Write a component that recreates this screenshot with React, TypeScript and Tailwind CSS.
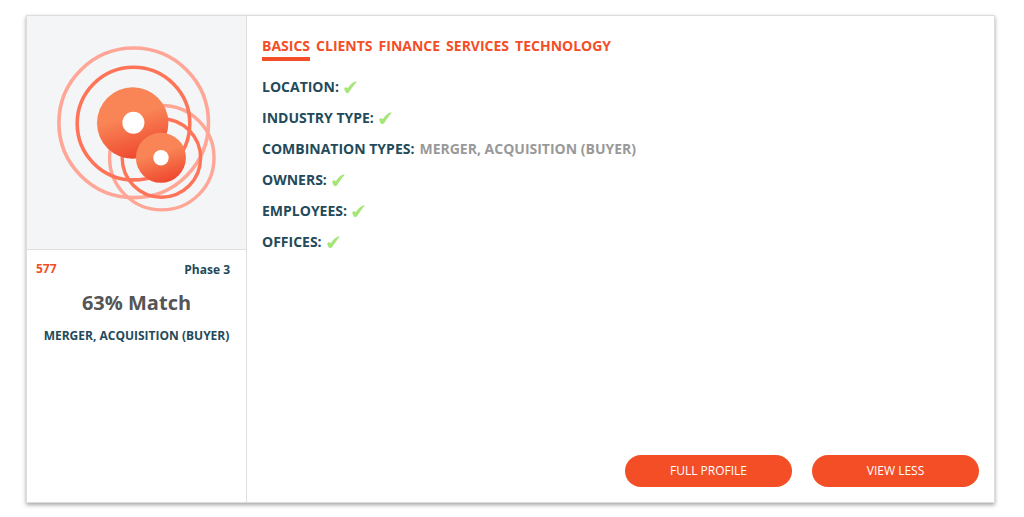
import React, { useState } from 'react';

interface Criterion {
  label: string;
  value?: string;
}

const TABS = ['BASICS', 'CLIENTS', 'FINANCE', 'SERVICES', 'TECHNOLOGY'];

const CRITERIA: Criterion[] = [
  { label: 'LOCATION:' },
  { label: 'INDUSTRY TYPE:' },
  { label: 'COMBINATION TYPES:', value: 'MERGER, ACQUISITION (BUYER)' },
  { label: 'OWNERS:' },
  { label: 'EMPLOYEES:' },
  { label: 'OFFICES:' },
];

const RingsLogo: React.FC = () => (
  <svg width="161" height="168" viewBox="0 0 161 168" fill="none" aria-hidden="true">
    <defs>
      <linearGradient id="disc" x1="0.35" y1="0" x2="0.65" y2="1">
        <stop offset="0.4" stopColor="#f98456" />
        <stop offset="1" stopColor="#ee452c" />
      </linearGradient>
    </defs>
    <circle cx="77.7" cy="77.8" r="74.8" stroke="#ffa696" strokeWidth="3.6" />
    <circle cx="105.8" cy="112.7" r="52.2" stroke="#ffa696" strokeWidth="3.4" />
    <circle cx="77.5" cy="78.6" r="56.3" stroke="#ff7459" strokeWidth="3.6" />
    <circle cx="105.4" cy="113" r="39.2" stroke="#ff7459" strokeWidth="3.4" />
    <circle cx="76.7" cy="78" r="35.7" fill="url(#disc)" />
    <circle cx="77.4" cy="77.7" r="11" fill="#fff" />
    <circle cx="104.9" cy="112.8" r="25" fill="url(#disc)" />
    <circle cx="105" cy="112.7" r="7.7" fill="#fff" />
  </svg>
);

const CheckMark: React.FC = () => (
  <svg width="13" height="13" viewBox="0 0 13 13" role="img" aria-label="Match">
    <path
      d="M0.3 8C0.1 6.1 2.8 5.6 3.8 7.3C5.8 4.1 8 1.7 10.6 0.7C11.6 0.3 12.4 0.5 12.6 0.9C10.2 3.4 7.8 6.8 5.4 10.8C4.6 12.3 2.2 12.7 1.5 11.1C1 10 0.4 9 0.3 8Z"
      fill="#a6e578"
    />
  </svg>
);

const App: React.FC = () => {
  const [activeTab, setActiveTab] = useState('BASICS');

  return (
    <main className="min-h-screen bg-white px-[26px] pt-[15px] pb-3.5 font-['Open_Sans','Noto_Sans',sans-serif] text-[#234a5a]">
      <article className="mr-[3px] flex min-h-[488px] border border-[#dcdcdc] bg-white shadow-[0_2px_4px_rgba(0,0,0,0.35)]">
        <aside className="w-[220px] shrink-0 border-r border-[#dfdfdf]">
          <div className="flex justify-center border-b border-[#dfdfdf] bg-[#f3f5f7] pt-[29px] pb-9">
            <RingsLogo />
          </div>
          <div className="px-2 pt-2">
            <div className="flex items-start justify-between px-px pr-2 text-xs font-bold">
              <span className="leading-[22px] text-[#f44e27]">577</span>
              <span className="leading-6">Phase 3</span>
            </div>
            <h2 className="mt-[7px] text-center text-xl leading-7 font-bold text-[#555]">63% Match</h2>
            <p className="mt-[9px] text-center text-xs leading-5 font-bold whitespace-nowrap">MERGER, ACQUISITION (BUYER)</p>
          </div>
        </aside>

        <section className="flex min-w-0 flex-1 flex-col px-[15px] pt-5 pb-[15px]">
          <nav className="flex gap-1.5 text-sm leading-5 font-bold text-[#f44e27]">
            {TABS.map(tab => (
              <button
                key={tab}
                type="button"
                onClick={() => setActiveTab(tab)}
                className={`cursor-pointer border-b-4 pb-px ${activeTab === tab ? 'border-[#f44e27]' : 'border-transparent'}`}
              >
                {tab}
              </button>
            ))}
          </nav>

          <ul className="mt-4 flex flex-col gap-[11px] text-sm leading-5 font-bold">
            {CRITERIA.map(({ label, value }) => (
              <li key={label} className="flex items-center gap-[5px]">
                <span>{label}</span>
                {value ? <span className="text-[#999]">{value}</span> : <CheckMark />}
              </li>
            ))}
          </ul>

          <div className="mt-auto flex justify-end gap-5 text-xs text-white">
            <button type="button" className="h-8 w-[167px] cursor-pointer rounded-full bg-[#f44e27]">
              FULL PROFILE
            </button>
            <button type="button" className="h-8 w-[167px] cursor-pointer rounded-full bg-[#f44e27]">
              VIEW LESS
            </button>
          </div>
        </section>
      </article>
    </main>
  );
};

export default App;
